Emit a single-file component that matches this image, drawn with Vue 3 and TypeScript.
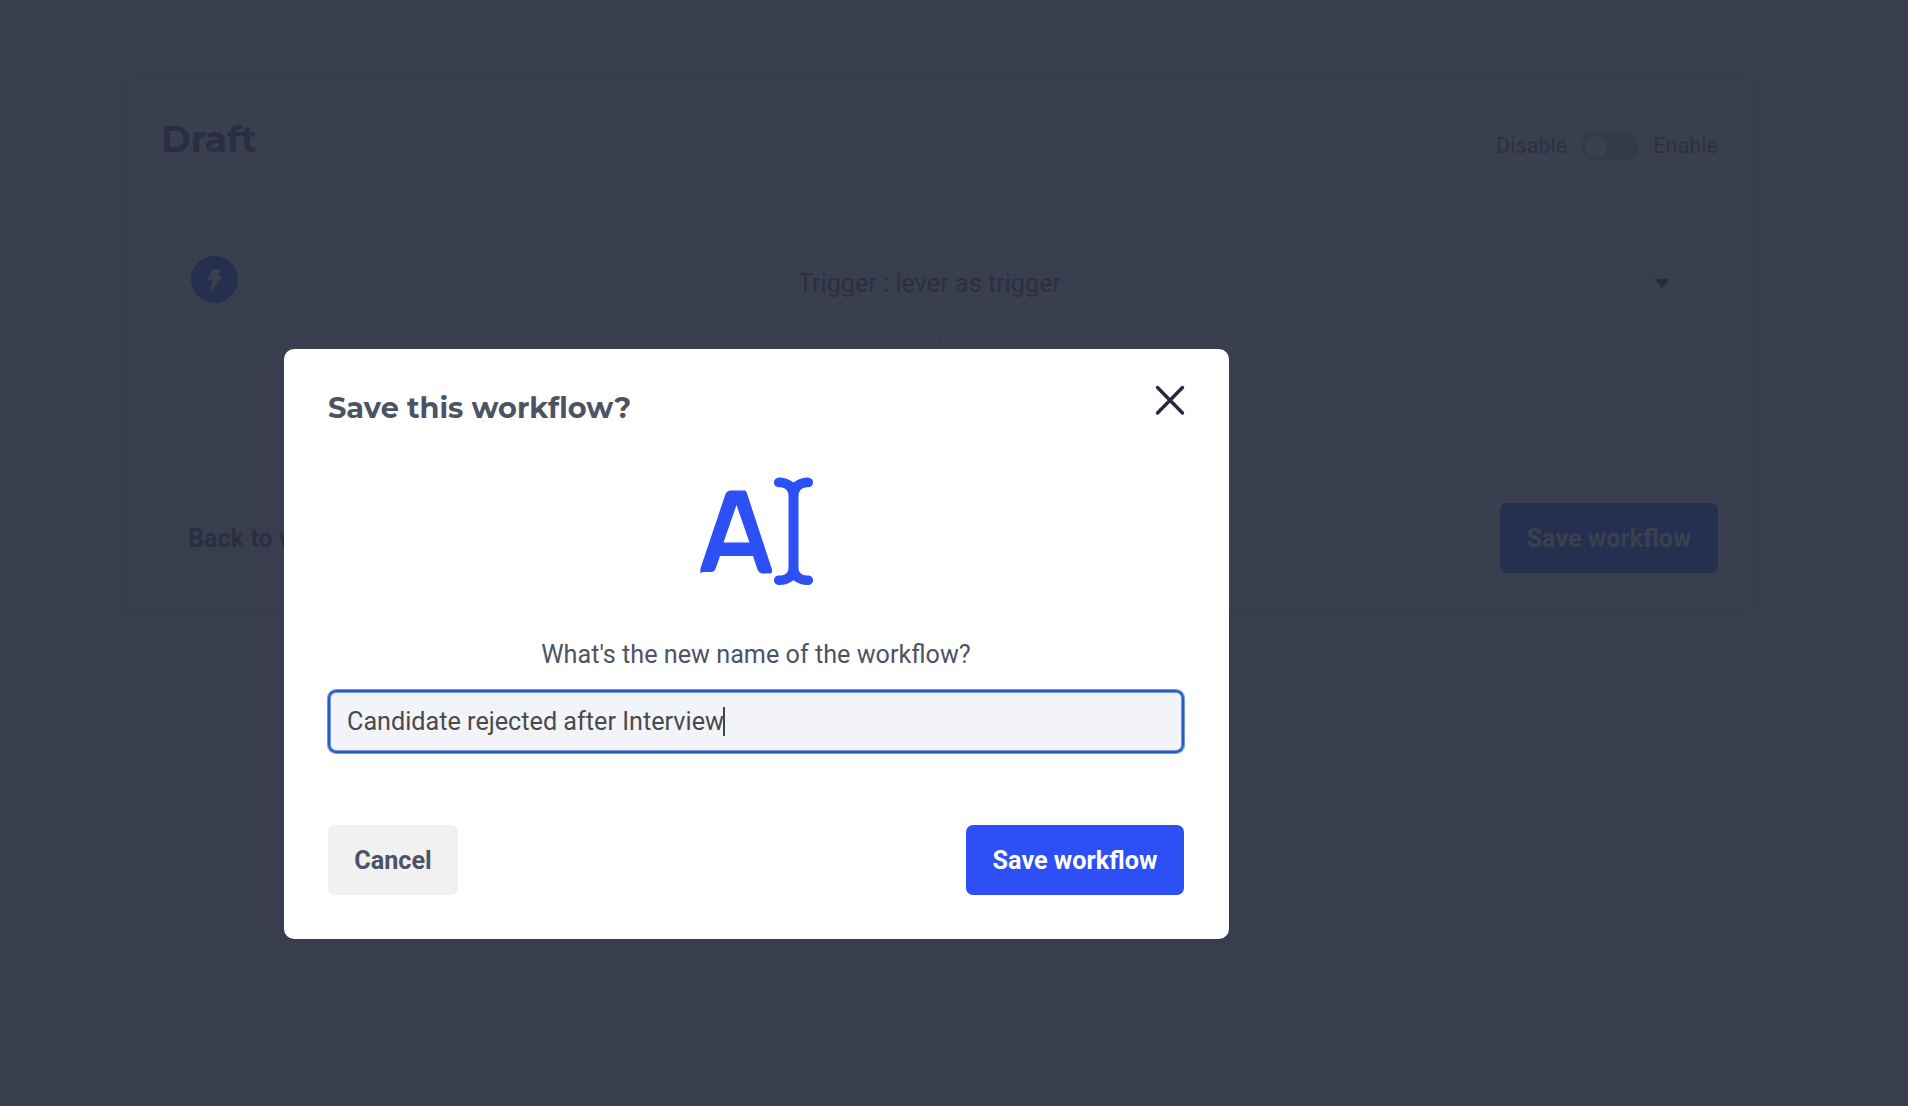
<script setup lang="ts">
import { ref } from 'vue'

const workflowName = ref('Candidate rejected after Interview')
const enabled = ref(false)
const showModal = ref(true)

function closeModal() {
  showModal.value = false
}
</script>

<template>
  <div class="page">
    <section class="workflow-card">
      <header class="card-header">
        <h1>Draft</h1>
        <div class="toggle-group">
          <span class="toggle-label">Disable</span>
          <button type="button" class="toggle" :class="{ on: enabled }" aria-label="Enable workflow"
            @click="enabled = !enabled">
            <span class="knob"></span>
          </button>
          <span class="toggle-label">Enable</span>
        </div>
      </header>

      <div class="card-body">
        <div class="step">
          <div class="step-icon">
            <svg width="16" height="24" viewBox="0 0 16 24">
              <path d="M6.200 1h6.800q.9 0 .6.8L11.600 8h3.400q1 0 .4 1L4.400 22.700q-1 .9-1.700-.1-.2-.3 0-.8L5.500 12.500H1q-1 0-.6-1L5.300 1.600q.3-.6.9-.6z" />
            </svg>
          </div>
          <div class="step-name">Trigger : lever as trigger</div>
          <button type="button" class="step-menu" aria-label="Step menu">
            <svg width="14" height="9" viewBox="0 0 14 9">
              <path d="M0 0h14L7 9z" />
            </svg>
          </button>
        </div>
        <div class="connector"></div>
        <div class="card-actions">
          <button type="button" class="btn back">Back to workflows</button>
          <button type="button" class="btn save-dim">Save workflow</button>
        </div>
      </div>
    </section>

    <div v-if="showModal" class="overlay">
      <div class="modal" role="dialog">
        <header class="modal-header">
          <h2>Save this workflow?</h2>
          <button type="button" class="close" aria-label="Close" @click="closeModal">
            <svg width="30" height="30" viewBox="0 0 30 30">
              <path d="M2.500 2.500l25 25.500M27.500 2.500l-25 25.500" />
            </svg>
          </button>
        </header>

        <!-- rename icon -->
        <svg class="rename-icon" width="114" height="110" viewBox="0 0 114 110">
          <path fill-rule="evenodd"
            d="M31 20.500H44.500Q46 20.500 46.700 22.500L72 99.500Q72.600 103.500 69.500 103.500H61.500Q58.500 102.500 57.500 99.500L53 86H20L15.500 99Q14.500 101.500 12 102H2.500Q.8 104 .5 102.500 0 99.500 .8 97.500L25.500 24Q27 20.500 31 20.500zM36.500 35L23.500 72.500H49.500z" />
          <path
            d="M78 7.700C84 7 89 9.500 93.500 12.500 98 9.500 103 7 109 7.700 114.400 8.800 114.400 16.300 109 17.300H106Q98.500 18.500 98.500 26V98Q98.500 104.500 106 105.500H109C114.400 106.500 114.400 114 109 115 103 115.500 98 113.300 93.500 110.300 89 113.300 84 115.500 78 115 72.600 114 72.600 106.500 78 105.500H81Q88.500 104.500 88.500 98V26Q88.500 18.500 81 17.300H78C72.600 16.300 72.600 8.800 78 7.700z" />
        </svg>

        <label class="prompt" for="workflow-name">What's the new name of the workflow?</label>
        <div id="workflow-name" class="name-input" role="textbox">
          <span>{{ workflowName }}</span><i class="caret"></i>
        </div>

        <footer class="modal-footer">
          <button type="button" class="btn cancel" @click="closeModal">Cancel</button>
          <button type="button" class="btn save" @click="closeModal">Save workflow</button>
        </footer>
      </div>
    </div>
  </div>
</template>

<style>
body {
  margin: 0;
  background: #393e4e;
}
</style>

<style scoped>
* {
  box-sizing: border-box;
}

button {
  border: 0;
  padding: 0;
  font-family: inherit;
  cursor: pointer;
}

svg {
  display: block;
  overflow: visible;
}

.page {
  position: relative;
  height: 1106px;
  padding: 82px 154px 0 125px;
  border-bottom: 2px solid #3b3c4f;
  background: #393e4e;
  font-family: Roboto, "Liberation Sans", sans-serif;
  overflow: hidden;
}

.workflow-card {
  height: 527px;
  background: #3a3f4f;
  border-radius: 5px;
  box-shadow: 0 0 3px 1px #383d4c;
}

.card-header {
  display: flex;
  justify-content: space-between;
  align-items: flex-start;
  height: 121px;
  padding: 33px 36px 0;
  border-bottom: 1px solid #383d4d;
}

h1,
h2 {
  margin: 0;
  font-family: Montserrat, Inter, sans-serif;
  font-weight: 700;
}

h1 {
  font-size: 36px;
  line-height: 48px;
  color: #292e40;
}

.toggle-group {
  display: flex;
  align-items: center;
  gap: 14px;
  margin-top: 17px;
  height: 29px;
  font-size: 21.6px;
  color: #2c3142;
}

.toggle-label {
  padding-bottom: 2px;
}

.toggle {
  width: 58px;
  height: 29px;
  padding: 4px;
  border-radius: 15px;
  background: #353a4a;
}

.knob {
  display: block;
  width: 22px;
  height: 22px;
  border-radius: 50%;
  background: #3a3f4f;
}

.toggle.on .knob {
  margin-left: auto;
}

.card-body {
  padding: 29px 36px 0;
}

.step {
  display: flex;
  align-items: center;
  height: 103px;
  padding: 0 15px 0 29px;
  border: 1px solid #373c4c;
}

.step-icon {
  display: flex;
  align-items: center;
  justify-content: center;
  width: 47px;
  height: 47px;
  margin-bottom: 8px;
  border-radius: 50%;
  background: #252f4f;
}

.step-icon svg {
  fill: #3b404f;
}

.step-name {
  flex: 1;
  text-align: center;
  font-size: 25.2px;
  color: #2b3041;
}

.step-menu {
  display: flex;
  align-items: center;
  justify-content: center;
  width: 81px;
  height: 69px;
  border-radius: 7px;
  background: #393e4e;
}

.step-menu svg {
  fill: #25293c;
}

.connector {
  width: 1px;
  height: 80px;
  margin: 0 auto;
  background: #353a4a;
}

.card-actions {
  display: flex;
  justify-content: space-between;
  margin-top: 88px;
}

.btn {
  height: 70px;
  padding: 0 26px;
  border-radius: 7px;
  font-size: 25.2px;
  font-weight: 700;
  white-space: nowrap;
}

.back {
  padding-left: 27px;
  background: #393e4e;
  color: #292e40;
}

.save-dim {
  width: 218px;
  background: #252f4f;
  color: #3b404f;
}

.overlay {
  position: absolute;
  inset: 0;
  padding: 349px 0 0 284px;
}

.modal {
  display: flex;
  flex-direction: column;
  width: 945px;
  height: 590px;
  padding: 35px 45px 44px 44px;
  border-radius: 10px;
  background: #fff;
}

.modal-header {
  display: flex;
  justify-content: space-between;
  align-items: flex-start;
}

h2 {
  padding-top: 4px;
  font-size: 28.8px;
  line-height: 40px;
  color: #4d5365;
}

.close {
  margin: 1px -1px 0 0;
  background: none;
}

.close path {
  fill: none;
  stroke: #25293c;
  stroke-width: 3.4;
  stroke-linecap: round;
}

.rename-icon {
  align-self: center;
  margin: 42px 0 0 2px;
  fill: #2c50f6;
}

.prompt {
  margin-top: 57px;
  text-align: center;
  font-size: 25.2px;
  line-height: 36px;
  color: #4d5365;
}

.name-input {
  display: flex;
  align-items: center;
  height: 65px;
  margin: 16px -1px 0;
  padding: 0 19px;
  border: 1px solid #7398dc;
  border-radius: 9px;
  background: #f3f4f9;
  box-shadow: inset 0 0 0 2px #245bc9, inset 0 0 0 3px #7398dc;
  font-size: 25.2px;
  color: #4a4a4a;
}

.caret {
  width: 2px;
  height: 29px;
  margin-left: -1px;
  background: #444;
}

.modal-footer {
  display: flex;
  justify-content: space-between;
  margin-top: auto;
}

.cancel {
  width: 130px;
  background: #f1f1f1;
  color: #4d5365;
}

.save {
  width: 218px;
  background: #2c50f6;
  color: #fff;
}
</style>
